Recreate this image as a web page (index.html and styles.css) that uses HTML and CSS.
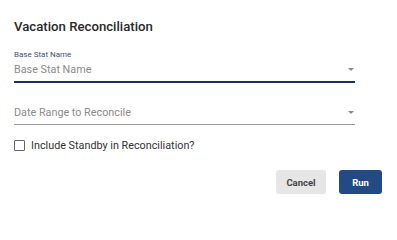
FILE: index.html
```html
<!DOCTYPE html>
<html>
<head>
<meta charset="utf-8">
<link rel="stylesheet" href="styles.css">
</head>
<body>
<div class="dialog">
  <h2 class="title">Vacation Reconciliation</h2>
  <div class="field field-active">
    <label class="field-label">Base Stat Name</label>
    <div class="select">
      <span class="placeholder">Base Stat Name</span>
      <span class="arrow"></span>
    </div>
  </div>
  <div class="field">
    <div class="select">
      <span class="placeholder">Date Range to Reconcile</span>
      <span class="arrow"></span>
    </div>
  </div>
  <label class="check-row">
    <span class="checkbox"></span>
    <span class="check-label">Include Standby in Reconciliation?</span>
  </label>
  <div class="actions">
    <button class="btn btn-cancel">Cancel</button>
    <button class="btn btn-run">Run</button>
  </div>
</div>
</body>
</html>
```
FILE: styles.css
```css
html, body {
  margin: 0;
  padding: 0;
  background: #ffffff;
}
body {
  font-family: Roboto, "Liberation Sans", sans-serif;
  width: 397px;
  height: 203px;
  overflow: hidden;
}
.dialog {
  padding: 19px 15px 0 14px;
}
.title {
  margin: 0;
  font-size: 13.2px;
  font-weight: 500;
  line-height: 16px;
  color: #2a2a2a;
}
.field {
  width: 341px;
}
.field-active {
  margin-top: 15px;
  border-bottom: 2px solid #1b2f66;
}
.field + .field {
  margin-top: 20px;
  border-bottom: 1px solid #9a9a9a;
}
.field-label {
  display: block;
  font-size: 8px;
  line-height: 10px;
  color: #3e4f78;
}
.select {
  display: flex;
  align-items: center;
  justify-content: space-between;
  height: 19px;
  padding-bottom: 2px;
}
.placeholder {
  font-size: 10.8px;
  color: #8b8b8b;
}
.arrow {
  width: 0;
  height: 0;
  margin-right: 1px;
  border-left: 3px solid transparent;
  border-right: 3px solid transparent;
  border-top: 3px solid #8a8a8a;
}
.check-row {
  display: flex;
  align-items: center;
  gap: 6px;
  margin-top: 14px;
}
.checkbox {
  box-sizing: border-box;
  width: 11px;
  height: 11px;
  border: 1.5px solid #666666;
  border-radius: 1px;
}
.check-label {
  font-size: 10.8px;
  color: #333333;
}
.actions {
  display: flex;
  justify-content: flex-end;
  gap: 13px;
  margin-top: 18px;
}
.btn {
  height: 24px;
  border: none;
  border-radius: 3px;
  font-family: Roboto, "Liberation Sans", sans-serif;
  font-size: 9.5px;
  font-weight: 700;
  cursor: pointer;
}
.btn-cancel {
  width: 50px;
  background: #e6e6e6;
  color: #444444;
}
.btn-run {
  width: 43px;
  background: #224a85;
  color: #ffffff;
}
```
